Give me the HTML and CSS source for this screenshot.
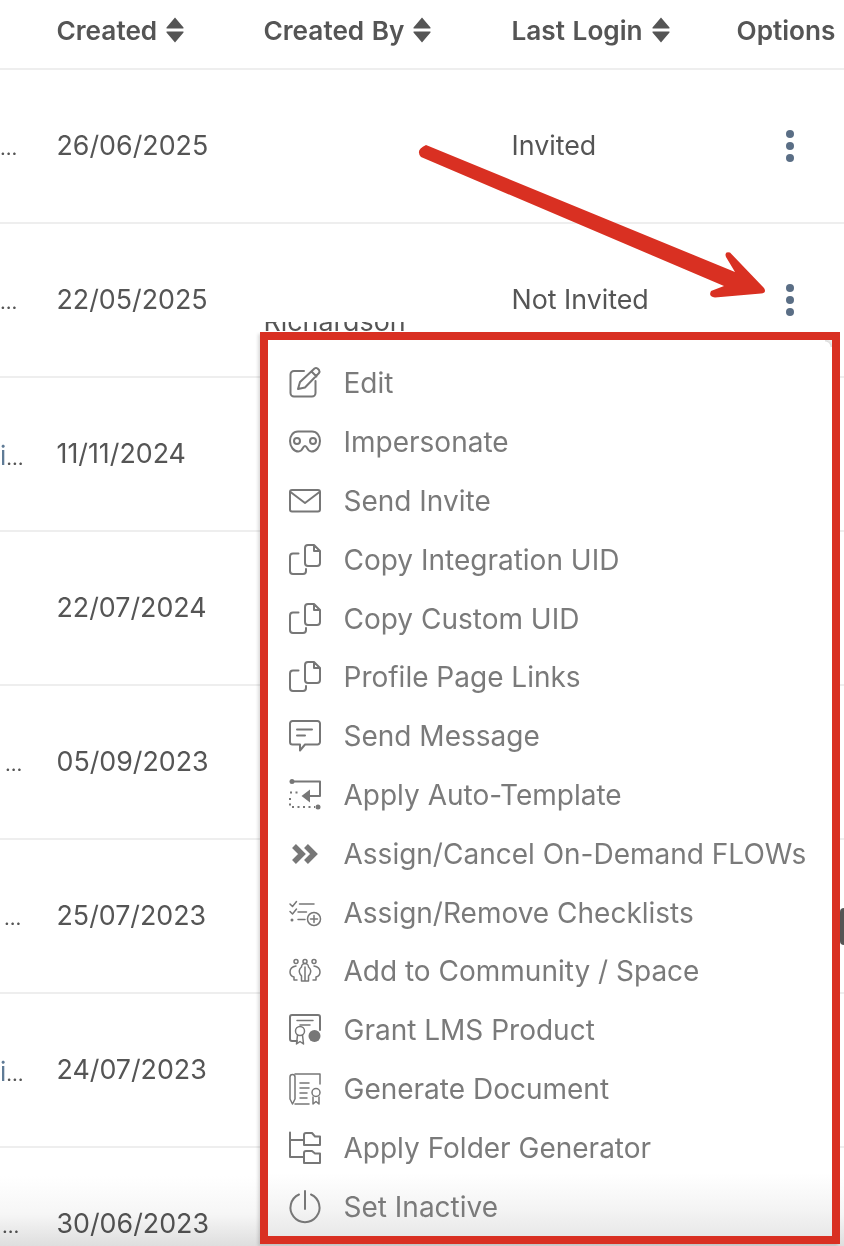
FILE: index.html
```html
<!DOCTYPE html>
<html lang="en">
<head>
<meta charset="utf-8">
<title>Users</title>
<link rel="stylesheet" href="styles.css">
</head>
<body>
<div class="page">
  <svg width="0" height="0" class="defs" aria-hidden="true">
    <defs>
      <symbol id="sort" viewBox="0 0 20 26"><path d="M10 .5 L18.500 10.500 Q19 11.500 18 11.500 H2 Q1 11.500 1.500 10.500Z M10 25.500 L18.500 15.500 Q19 14.500 18 14.500 H2 Q1 14.500 1.500 15.500Z"/></symbol>
      <symbol id="dots" viewBox="0 0 8 32"><circle cx="4" cy="4" r="4"/><circle cx="4" cy="16" r="4"/><circle cx="4" cy="28" r="4"/></symbol>
      <symbol id="copy" viewBox="0 0 32 32"><path d="M19 1 H25 L31 7 V19 a3 3 0 0 1-3 3 H19 a3 3 0 0 1-3-3 V4 a3 3 0 0 1 3-3Z M25 1 V7 H31"/><path d="M9.500 9.500 H4 a3 3 0 0 0-3 3 V27 a3 3 0 0 0 3 3 H14 a3 3 0 0 0 3-3 V25"/></symbol>
    </defs>
  </svg>

  <section class="table">
    <div class="row thead">
      <div class="lead"></div>
      <div class="cell">Created <svg class="sort"><use href="#sort"/></svg></div>
      <div class="cell">Created By <svg class="sort"><use href="#sort"/></svg></div>
      <div class="cell">Last Login <svg class="sort"><use href="#sort"/></svg></div>
      <div class="cell">Options</div>
    </div>
    <div class="row">
      <div class="lead p1">…</div><div class="cell">26/06/2025</div><div class="cell"></div><div class="cell">Invited</div>
      <div class="cell opt"><svg class="kebab"><use href="#dots"/></svg></div>
    </div>
    <div class="row">
      <div class="lead p1">…</div><div class="cell">22/05/2025</div>
      <div class="cell clip"><span>Richardson</span></div>
      <div class="cell">Not Invited</div>
      <div class="cell opt"><svg class="kebab"><use href="#dots"/></svg></div>
    </div>
    <div class="row">
      <div class="lead p2"><span class="link">i</span>…</div><div class="cell">11/11/2024</div><div class="cell"></div><div class="cell"></div><div class="cell"></div>
    </div>
    <div class="row">
      <div class="lead"></div><div class="cell">22/07/2024</div><div class="cell"></div><div class="cell"></div><div class="cell"></div>
    </div>
    <div class="row">
      <div class="lead p3">…</div><div class="cell">05/09/2023</div><div class="cell"></div><div class="cell"></div><div class="cell"></div>
    </div>
    <div class="row">
      <div class="lead p4">…</div><div class="cell">25/07/2023</div><div class="cell"></div><div class="cell"></div><div class="cell"></div>
    </div>
    <div class="row">
      <div class="lead p2"><span class="link">i</span>…</div><div class="cell">24/07/2023</div><div class="cell"></div><div class="cell"></div><div class="cell"></div>
    </div>
    <div class="row">
      <div class="lead p5">…</div><div class="cell">30/06/2023</div><div class="cell"></div><div class="cell"></div><div class="cell"></div>
    </div>
  </section>

  <div class="fade"></div>
  <div class="tab"></div>

  <nav class="menu">
    <a class="item"><svg class="ico" viewBox="0 0 32 32"><path d="M15 4 H5 a3.500 3.500 0 0 0-3.500 3.500 V26 a3.500 3.500 0 0 0 3.500 3.500 H23 a3.500 3.500 0 0 0 3.500-3.500 V14"/><path d="M9 22 L11 15 L25.500 1.500 q1.500-1 3 0 l1.500 1.500 q1 1.500 0 3 L16 20.500Z M22.500 4.500 L27.500 9.500"/></svg>Edit</a>
    <a class="item"><svg class="ico" viewBox="0 0 32 32"><path d="M9 5.500 H23 C28 5.500 31 10 31 15 C31 21 27 25.500 22.500 25.500 C19.500 25.500 18.500 23 17.500 21 C16.500 19.500 15.500 19.500 14.500 21 C13.500 23 12.500 25.500 9.500 25.500 C5 25.500 1 21 1 15 C1 10 4 5.500 9 5.500Z"/><circle cx="8" cy="15" r="3"/><circle cx="24" cy="15" r="3"/></svg>Impersonate</a>
    <a class="item"><svg class="ico" viewBox="0 0 32 32"><rect x="1" y="5" width="30" height="21.500" rx="2"/><path d="M1.500 7 L16 18 L30.500 7"/></svg>Send Invite</a>
    <a class="item"><svg class="ico"><use href="#copy"/></svg>Copy Integration UID</a>
    <a class="item"><svg class="ico"><use href="#copy"/></svg>Copy Custom UID</a>
    <a class="item"><svg class="ico"><use href="#copy"/></svg>Profile Page Links</a>
    <a class="item"><svg class="ico" viewBox="0 0 32 32"><path d="M3.500 1 H28.500 a2.500 2.500 0 0 1 2.500 2.500 V22 a2.500 2.500 0 0 1-2.500 2.500 H16 L11 30.500 V24.500 H3.500 A2.500 2.500 0 0 1 1 22 V3.500 A2.500 2.500 0 0 1 3.500 1Z"/><path d="M8 9.500 H23 M8 15.500 H16"/></svg>Send Message</a>
    <a class="item"><svg class="ico" viewBox="0 0 32 32"><circle class="fill" cx="3" cy="2.500" r="2.500"/><path d="M3 2.500 H31 V17 H17"/><path class="fill" d="M12.500 17 L21 10.500 V23.500Z"/><path class="dash" d="M1 13.500 H12 M1 19 V28 H26"/><circle class="fill" cx="29" cy="28" r="2.500"/></svg>Apply Auto-Template</a>
    <a class="item"><svg class="ico" viewBox="0 0 32 32"><path class="bold" d="M5 8 L13 16 L5 24 M17 8 L25 16 L17 24"/></svg>Assign/Cancel On-Demand FLOWs</a>
    <a class="item"><svg class="ico thin" viewBox="0 0 32 32"><path d="M1 7 L3.500 9.500 L7.500 4.500 M1 14.500 L3.500 17 L7.500 12 M10.500 7 H25 M9 15 H17.500 M9 22.500 H16"/><circle class="fill" cx="3" cy="23" r="1.500"/><circle cx="25" cy="22" r="6.500"/><path d="M25 18.500 V25.500 M21.500 22 H28.500"/></svg>Assign/Remove Checklists</a>
    <a class="item"><svg class="ico thin" viewBox="0 0 32 32"><circle cx="7" cy="6.500" r="2"/><circle cx="16" cy="6.500" r="2"/><circle cx="25" cy="6.500" r="2"/><path d="M12.500 12 a3.500 3.500 0 0 1 7 0 Q23 15 21 19 L19.500 21 V26 H12.500 V21 L11 19 Q9 15 12.500 12Z M16 12 V26"/><path d="M7 11 Q1 12 1 17 Q1 21 5 22 V25 H8 M25 11 Q31 12 31 17 Q31 21 27 22 V25 H24"/></svg>Add to Community / Space</a>
    <a class="item"><svg class="ico" viewBox="0 0 32 32"><path d="M8 27 H3 A2 2 0 0 1 1 25 V3 A2 2 0 0 1 3 1 H29 A2 2 0 0 1 31 3 V16"/><path class="hair" d="M8 6.500 H24 M11 11 H21"/><circle class="hair" cx="11" cy="17" r="4.500"/><path class="hair" d="M8.500 21 L7.500 30 L11 27.500 L14.500 30 L13.500 21"/><circle class="fill" cx="25.500" cy="22" r="6"/></svg>Grant LMS Product</a>
    <a class="item"><svg class="ico thin" viewBox="0 0 32 32"><path d="M1 4 a2.500 2.500 0 0 1 5 0 V26 L3.500 31 L1 26Z"/><path d="M6 1 H31 V11 M6 31 H20 M11 10 H20 M11 15 H20 M11 20 H18 M11 25 H18"/><circle cx="27" cy="19.500" r="4"/><path d="M24 24 V31 L27 28.500 L30 31 V24"/></svg>Generate Document</a>
    <a class="item"><svg class="ico" viewBox="0 0 32 32"><path d="M1 .5 V25 H15 M1 8 H15"/><path d="M15 3 a2 2 0 0 1 2-2 H23 L26 4.500 H31 V13 H15Z M15 21 a2 2 0 0 1 2-2 H23 L26 21.500 H31 V31 H15Z"/></svg>Apply Folder Generator</a>
    <a class="item"><svg class="ico" viewBox="0 0 32 32"><path d="M10 3.500 A14.500 14.500 0 1 0 22 3.500 M16 0 V18"/></svg>Set Inactive</a>
  </nav>

  <svg class="arrow" viewBox="0 0 844 400" width="844" height="400" aria-hidden="true">
    <path class="arrow-fill" d="M426 145 L735 272 L726 257 Q724 251 730 252.500 L764 288 Q767 293 761 293.500 L715 297.500 Q708 297 711 291 L724 286 L421 157 Q415 150 426 145Z"/>
  </svg>
</div>
</body>
</html>
```
FILE: styles.css
```css
* { box-sizing: border-box; }
html, body { margin: 0; background: #fff; }
.page {
  position: relative;
  width: 844px;
  height: 1246px;
  overflow: hidden;
  font-family: Inter, "Liberation Sans", sans-serif;
  font-size: 26.8px;
  color: #555;
}
.defs { position: absolute; }
.row {
  display: grid;
  grid-template-columns: 56.5px 207px 248px 225px 107.5px;
  height: 154px;
  align-items: center;
  border-bottom: 2px solid #eee;
  padding-bottom: 2px;
}
.row.thead {
  height: 70px;
  padding-bottom: 8px;
  font-size: 26.2px;
  font-weight: 600;
  word-spacing: 1px;
}
.cell { display: flex; align-items: center; white-space: nowrap; }
.lead { white-space: nowrap; overflow: hidden; font-size: 20px; padding-top: 5px; }
.lead.p1, .lead.p2 { padding-left: 0; }
.lead.p3 { padding-left: 5px; }
.lead.p4 { padding-left: 4px; }
.lead.p5 { padding-left: 2px; }
.link { color: #5f7b96; font-size: 26px; }
.sort { width: 20px; height: 26px; margin-left: 8px; fill: #555; }
.opt { padding-left: 49.5px; }
.kebab { width: 8px; height: 32px; margin-top: 2px; fill: #5a6e85; }
.clip {
  align-self: start;
  height: 10px;
  margin-top: 98px;
  overflow: hidden;
  display: block;
}
.clip span { display: block; line-height: 32px; margin-top: -17px; }

.fade {
  position: absolute;
  left: 0; right: 0; bottom: 0;
  height: 70px;
  background: linear-gradient(to bottom, #fff 0%, #f6f6f6 55%, #dedede 100%);
  mix-blend-mode: multiply;
  z-index: 2;
  pointer-events: none;
}
.tab {
  position: absolute;
  top: 908px;
  right: 0;
  width: 4px;
  height: 37px;
  background: #555;
  border-radius: 4px 0 0 4px;
}
.menu {
  position: absolute;
  top: 332px;
  left: 260px;
  width: 580px;
  height: 912px;
  border: 8px solid #d93022;
  padding: 14px 0 0 21px;
  display: flex;
  flex-direction: column;
  box-shadow: -2px 2px 3px rgba(0,0,0,.14);
  color: #7a7a7a;
  font-size: 28px;
  z-index: 3;
  background: linear-gradient(to bottom, #fff 93%, #f4f4f4 97%, #e8e8e8 100%);
}
.menu::before {
  content: "";
  position: absolute;
  top: 0;
  right: 0;
  width: 7px;
  height: 7px;
  background: radial-gradient(circle at bottom left, transparent 5px, #ddd 6px, #eee 8px);
}
.item {
  display: flex;
  align-items: center;
  gap: 22.5px;
  height: 58.8px;
  white-space: nowrap;
}
.ico {
  width: 32px;
  height: 32px;
  flex: none;
  fill: none;
  stroke: #777;
  stroke-width: 2;
  stroke-linejoin: round;
  stroke-linecap: round;
  overflow: visible;
}
.ico.thin { stroke-width: 1.5; }
.ico .hair { stroke-width: 1.5; }
.ico .fill { fill: #777; stroke: none; }
.ico .dash { stroke-dasharray: 2 3.500; stroke-linecap: butt; }
.ico .bold { stroke-width: 5.500; stroke-linecap: butt; stroke-linejoin: miter; }
.arrow {
  position: absolute;
  top: 0;
  left: 0;
  z-index: 4;
  pointer-events: none;
}
.arrow-fill { fill: #d93022; }
```
